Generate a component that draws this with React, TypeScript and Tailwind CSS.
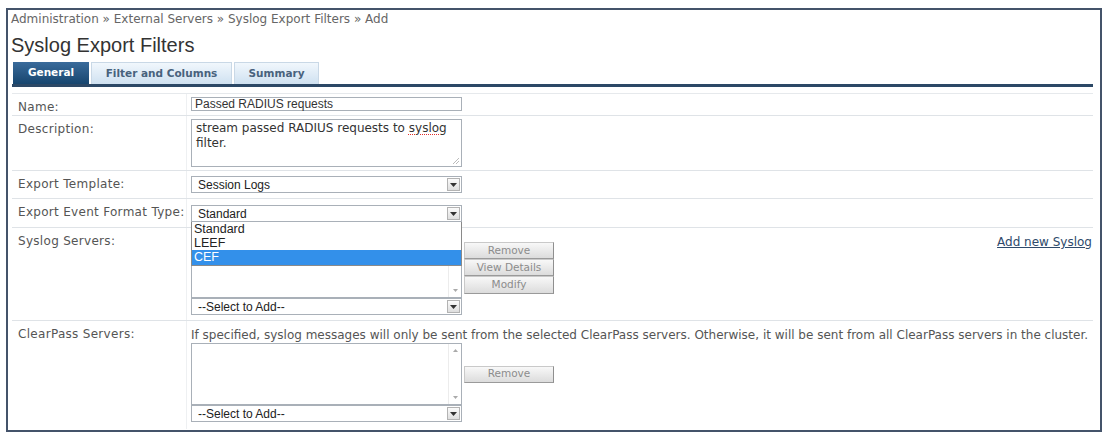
import React from 'react';

const verd = "font-['DejaVu_Sans',Verdana,sans-serif]";
const arial = "font-['Liberation_Sans',Arial,sans-serif]";

const Arrow = () => (
  <span className="mr-[1px] flex h-[13px] w-[13px] shrink-0 items-center justify-center border border-[#b3b3b3] bg-linear-to-b from-[#fbfbfb] to-[#dedede]">
    <svg width="7" height="4" viewBox="0 0 7 4">
      <path d="M0 0h7L3.5 4z" fill="#333" />
    </svg>
  </span>
);

const Select = ({ value, className = '' }: { value: string; className?: string }) => (
  <div
    className={`relative flex w-[271px] items-center border border-[#a9b0b8] bg-white ${arial} text-[12px] leading-[14px] text-[#222] ${className}`}
  >
    <span className="flex-1 pl-[6px]">{value}</span>
    <Arrow />
  </div>
);

const ListBox = ({ className = '' }: { className?: string }) => (
  <div className={`flex w-[271px] border border-[#a9b0b8] bg-white ${className}`}>
    <div className="flex-1" />
    <div className="flex w-[13px] flex-col items-center justify-between border-l border-[#ececec] py-[5px]">
      <svg width="5" height="3" viewBox="0 0 5 3">
        <path d="M0 3L2.5 0 5 3z" fill="#aaa" />
      </svg>
      <svg width="5" height="3" viewBox="0 0 5 3">
        <path d="M0 0h5L2.5 3z" fill="#aaa" />
      </svg>
    </div>
  </div>
);

const Btn = ({ label, className = '' }: { label: string; className?: string }) => (
  <button
    className={`flex h-[17px] w-[90px] items-center justify-center border border-[#c9c9c9] border-r-[#8f8f8f] border-b-[#9a9a9a] bg-linear-to-b from-[#f8f8f8] to-[#dcdcdc] ${verd} text-[10.5px] text-[#8c8c8c] ${className}`}
  >
    {label}
  </button>
);

const Label = ({ children }: { children: React.ReactNode }) => (
  <div className={`w-[175px] shrink-0 border-r border-[#eef0f2] pl-[6px] pt-[6px] ${verd} text-[12px] leading-[14px] tracking-[0.3px] text-[#555]`}>
    {children}
  </div>
);

const tabs = [
  { name: 'General', w: 'w-[76px]', active: true },
  { name: 'Filter and Columns', w: 'w-[141px]', active: false },
  { name: 'Summary', w: 'w-[85px]', active: false },
];

export default function App() {
  return (
    <div className="h-[437px] w-[1103px] bg-white pl-[6px] pt-[8px]">
      <div className="h-[424px] w-[1096px] border-2 border-[#44536a] px-[4px]">
        <div className={`-ml-[1px] pt-[2px] ${verd} text-[12px] leading-[14px] text-[#666]`}>
          Administration » External Servers » Syslog Export Filters » Add
        </div>
        <div className={`-ml-[1px] mt-[8px] ${arial} text-[20px] leading-[22px] text-[#333]`}>
          Syslog Export Filters
        </div>

        <div className="mt-[6px] flex w-[1081px] gap-[2px] border-b-[3px] border-[#2c4866] pl-[1px]">
          {tabs.map((t) => (
            <div
              key={t.name}
              className={`flex h-[22px] items-center justify-center ${t.w} ${verd} text-[10.5px] font-bold ${
                t.active
                  ? 'bg-linear-to-b from-[#3a6b9b] to-[#17466f] text-white'
                  : 'border border-b-0 border-[#c9d8e6] bg-linear-to-b from-[#f1f7fc] to-[#cfe1f1] text-[#48627d]'
              }`}
            >
              {t.name}
            </div>
          ))}
        </div>

        <div className="mt-[6px] w-[1081px] border-t border-[#e6e9ec]">
          {/* Name */}
          <div className="flex h-[22px] border-b border-[#dfe3e7]">
            <Label>Name:</Label>
            <div className="pl-[4px] pt-[3px]">
              <div className={`flex h-[14px] w-[271px] items-center border border-[#a9b0b8] pl-[3px] ${arial} text-[12px] text-[#333]`}>
                Passed RADIUS requests
              </div>
            </div>
          </div>

          {/* Description */}
          <div className="flex h-[55px] border-b border-[#dfe3e7]">
            <Label>Description:</Label>
            <div className="pl-[4px] pt-[3px]">
              <div className={`relative h-[48px] w-[271px] border border-[#a9b0b8] pl-[4px] pt-[1px] ${verd} text-[12px] leading-[15px] text-[#333]`}>
                stream passed RADIUS requests to{' '}
                <span className="underline decoration-[#e03030] decoration-dotted underline-offset-2">syslog</span>
                <br />
                filter.
                <svg className="absolute bottom-[1px] right-[1px]" width="8" height="8" viewBox="0 0 8 8">
                  <path d="M7 1L1 7M7 4L4 7" stroke="#bbb" strokeWidth="1" />
                </svg>
              </div>
            </div>
          </div>

          {/* Export Template */}
          <div className="flex h-[28px] border-b border-[#dfe3e7]">
            <Label>Export Template:</Label>
            <div className="pl-[4px] pt-[5px]">
              <Select value="Session Logs" className="h-[17px]" />
            </div>
          </div>

          {/* Export Event Format Type */}
          <div className="relative z-10 flex h-[29px] border-b border-[#dfe3e7]">
            <Label>Export Event Format Type:</Label>
            <div className="pl-[4px] pt-[6px]">
              <div className="relative">
                <Select value="Standard" className="h-[17px]" />
                <div className={`absolute left-0 top-full w-[271px] border border-t-0 border-[#8a8a8a] bg-white ${arial} text-[12.5px] text-[#222]`}>
                  <div className="flex h-[14px] items-center pl-[2px]">Standard</div>
                  <div className="flex h-[14px] items-center pl-[2px]">LEEF</div>
                  <div className="flex h-[15px] items-center bg-[#3390ea] pl-[2px] text-white">CEF</div>
                </div>
              </div>
            </div>
          </div>

          {/* Syslog Servers */}
          <div className="flex h-[93px] border-b border-[#dfe3e7]">
            <Label>Syslog Servers:</Label>
            <div className="flex flex-1 pl-[4px] pt-[4px]">
              <div className="flex flex-col">
                <ListBox className="h-[66px]" />
                <Select value="--Select to Add--" className="h-[17px]" />
              </div>
              <div className="ml-[2px] mt-[10px] flex flex-col">
                <Btn label="Remove" />
                <Btn label="View Details" />
                <Btn label="Modify" className="h-[18px]" />
              </div>
              <a className={`ml-auto mr-[1px] mt-[3px] self-start ${verd} text-[12px] leading-[14px] text-[#2e4a6b] underline`}>
                Add new Syslog
              </a>
            </div>
          </div>

          {/* ClearPass Servers */}
          <div className="flex h-[108px]">
            <Label>ClearPass Servers:</Label>
            <div className="flex flex-col pl-[4px] pt-[7px]">
              <div className={`${verd} text-[12px] leading-[14px] text-[#555]`}>
                If specified, syslog messages will only be sent from the selected ClearPass servers. Otherwise, it will be sent from all ClearPass servers in the cluster.
              </div>
              <div className="mt-[1px] flex items-center">
                <ListBox className="h-[62px]" />
                <Btn label="Remove" className="ml-[2px]" />
              </div>
              <Select value="--Select to Add--" className="h-[17px]" />
            </div>
          </div>
        </div>
      </div>
    </div>
  );
}
